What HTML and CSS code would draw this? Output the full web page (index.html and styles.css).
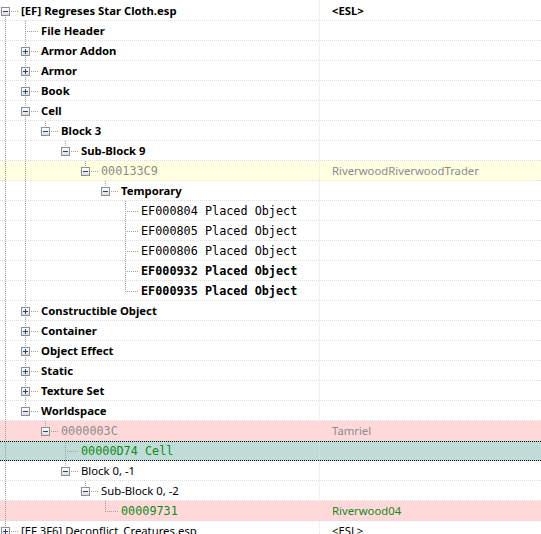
FILE: index.html
```html
<!DOCTYPE html>
<html lang="en">
<head>
  <meta charset="UTF-8">
  <title>xEdit Tree</title>
  <link rel="stylesheet" href="styles.css">
</head>
<body>
  <div id="tree" class="tree"></div>

  <script>
    const rows = [
      { l: 0, t: '[EF] Regreses Star Cloth.esp', v: '<ESL>', box: 'minus', cls: 'bold', vcls: 'bold' },
      { l: 1, t: 'File Header', cls: 'bold' },
      { l: 1, t: 'Armor Addon', box: 'plus', cls: 'bold' },
      { l: 1, t: 'Armor', box: 'plus', cls: 'bold' },
      { l: 1, t: 'Book', box: 'plus', cls: 'bold' },
      { l: 1, t: 'Cell', box: 'minus', cls: 'bold' },
      { l: 2, t: 'Block 3', box: 'minus', cls: 'bold' },
      { l: 3, t: 'Sub-Block 9', box: 'minus', cls: 'bold' },
      { l: 4, t: '000133C9', v: 'RiverwoodRiverwoodTrader', box: 'minus', cls: 'mono grey', vcls: 'grey', row: 'yellow' },
      { l: 5, t: 'Temporary', box: 'minus', cls: 'bold' },
      { l: 6, t: 'EF000804 Placed Object', cls: 'mono' },
      { l: 6, t: 'EF000805 Placed Object', cls: 'mono' },
      { l: 6, t: 'EF000806 Placed Object', cls: 'mono' },
      { l: 6, t: 'EF000932 Placed Object', cls: 'mono bold' },
      { l: 6, t: 'EF000935 Placed Object', cls: 'mono bold' },
      { l: 1, t: 'Constructible Object', box: 'plus', cls: 'bold' },
      { l: 1, t: 'Container', box: 'plus', cls: 'bold' },
      { l: 1, t: 'Object Effect', box: 'plus', cls: 'bold' },
      { l: 1, t: 'Static', box: 'plus', cls: 'bold' },
      { l: 1, t: 'Texture Set', box: 'plus', cls: 'bold' },
      { l: 1, t: 'Worldspace', box: 'minus', cls: 'bold' },
      { l: 2, t: '0000003C', v: 'Tamriel', box: 'minus', cls: 'mono grey', vcls: 'grey', row: 'pink' },
      { l: 3, t: '00000D74 Cell', cls: 'mono green', row: 'focus' },
      { l: 3, t: 'Block 0, -1', box: 'minus' },
      { l: 4, t: 'Sub-Block 0, -2', box: 'minus' },
      { l: 5, t: '00009731', v: 'Riverwood04', cls: 'mono green', vcls: 'green', row: 'pink' },
      { l: 0, t: '[EF 3F6] Deconflict_Creatures.esp', v: '<ESL>', box: 'plus', last: true }
    ];

    // does the node at index i (level lvl) have a later sibling?
    function continues(i, lvl) {
      for (let j = i + 1; j < rows.length; j++) {
        if (rows[j].l < lvl) return false;
        if (rows[j].l === lvl) return true;
      }
      return false;
    }

    function ancestorContinues(i, lvl) {
      for (let j = i - 1; j >= 0; j--) {
        if (rows[j].l === lvl) return continues(j, lvl);
      }
      return false;
    }

    const tree = document.getElementById('tree');
    rows.forEach(function (r, i) {
      const row = document.createElement('div');
      row.className = 'row' + (r.row ? ' ' + r.row : '');

      const cell = document.createElement('div');
      cell.className = 'tree-cell';

      for (let lvl = 0; lvl < r.l; lvl++) {
        const g = document.createElement('span');
        g.className = 'indent' + (ancestorContinues(i, lvl) ? ' line' : '');
        cell.appendChild(g);
      }

      const node = document.createElement('span');
      node.className = 'node';
      if (i === 0) node.classList.add('first');
      if (!continues(i, r.l) && !r.last) node.classList.add('end');
      if (r.box) {
        const b = document.createElement('i');
        b.className = 'box ' + r.box;
        node.appendChild(b);
      }
      cell.appendChild(node);

      const label = document.createElement('span');
      label.className = 'label ' + (r.cls || '');
      label.textContent = r.t;
      cell.appendChild(label);
      row.appendChild(cell);

      const val = document.createElement('div');
      val.className = 'value ' + (r.vcls || '');
      val.textContent = r.v || '';
      row.appendChild(val);

      tree.appendChild(row);
    });
  </script>
</body>
</html>
```

FILE: styles.css
```css
body {
  margin: 0;
  background-color: #fff;
  font-family: "Noto Sans", Arial, sans-serif;
  font-size: 11.3px;
  color: #000;
  overflow: hidden;
}
.tree {
  padding-top: 1px;
}
.row {
  display: flex;
  height: 20px;
  box-sizing: border-box;
  border-bottom: 1px dotted #dedede;
  line-height: 18px;
  white-space: nowrap;
}
.row.yellow {
  background-color: #ffffe1;
}
.row.pink {
  background-color: #ffd9d9;
}
.row.focus {
  background-color: #bfddd6;
  border-top: 1px dotted #000;
  border-bottom: 1px dotted #000;
  line-height: 16px;
}
.tree-cell {
  display: flex;
  width: 319px;
  flex: none;
  overflow: hidden;
  padding-top: 1px;
}
.indent,
.node {
  position: relative;
  width: 20px;
  flex: none;
}
.indent.line::before,
.node::before {
  content: "";
  position: absolute;
  left: 5px;
  top: -1px;
  width: 1px;
  height: 20px;
  background: repeating-linear-gradient(to bottom, #a0a0a0 0 1px, transparent 1px 2px);
}
.focus .indent.line::before,
.focus .node::before {
  top: -2px;
}
.node.first::before {
  top: 9px;
  height: 10px;
}
.node.end::before {
  height: 11px;
}
.node::after {
  content: "";
  position: absolute;
  left: 6px;
  top: 9px;
  width: 13px;
  height: 1px;
  background: repeating-linear-gradient(to right, transparent 0 1px, #a0a0a0 1px 2px);
}
.focus .node::after {
  top: 8px;
}
.box {
  position: absolute;
  left: 1px;
  top: 5px;
  width: 9px;
  height: 9px;
  box-sizing: border-box;
  border: 1px solid #8e8f8f;
  background: linear-gradient(#ffffff, #dcdcdc);
  z-index: 1;
}
.box::before,
.box::after {
  content: "";
  position: absolute;
  background-color: #27457c;
}
.box::before {
  left: 1px;
  top: 3px;
  width: 5px;
  height: 1px;
}
.box.plus::after {
  left: 3px;
  top: 1px;
  width: 1px;
  height: 5px;
}
.label {
  padding-left: 1px;
}
.value {
  flex: 1;
  padding-top: 1px;
  padding-left: 13px;
  background: repeating-linear-gradient(to bottom, #e2e2e2 0 1px, transparent 1px 2px) no-repeat left top / 1px 100%;
}
.bold {
  font-weight: bold;
}
.mono {
  font-family: "DejaVu Sans Mono", monospace;
  font-size: 11.8px;
}
.grey {
  color: #8c8c8c;
}
.green {
  color: #12891a;
}
```
